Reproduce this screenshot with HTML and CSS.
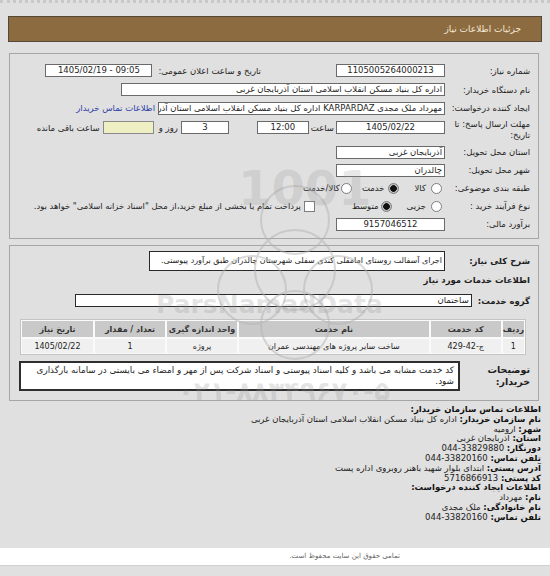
FILE: index.html
```html
<!DOCTYPE html>
<html lang="fa" dir="rtl">
<head>
<meta charset="utf-8">
<title>جزئیات اطلاعات نیاز</title>
<link rel="stylesheet" href="styles.css">
</head>
<body>
<div class="topdots"></div>
<div class="page">
  <div class="titlebar">جزئیات اطلاعات نیاز</div>

  <div class="box box1">
    <div class="row r1">
      <div class="lbl">شماره نیاز:</div>
      <div class="val">
        <span class="inp w107 c">1105005264000213</span>
        <span class="txt t-pub">تاریخ و ساعت اعلان عمومی:</span>
        <span class="inp w105 c m6 ltr">1405/02/19 - 09:05</span>
      </div>
    </div>
    <div class="row r2">
      <div class="lbl">نام دستگاه خریدار:</div>
      <div class="val"><span class="inp w322">اداره کل بنیاد مسکن انقلاب اسلامی استان آذربایجان غربی</span></div>
    </div>
    <div class="row r3">
      <div class="lbl">ایجاد کننده درخواست:</div>
      <div class="val">
        <span class="inp w285 clip">مهرداد ملک مجدی KARPARDAZ اداره کل بنیاد مسکن انقلاب اسلامی استان آذربایجان غربی</span>
        <span class="link">اطلاعات تماس خریدار</span>
      </div>
    </div>
    <div class="row r4">
      <div class="lbl">مهلت ارسال پاسخ: تا<br>تاریخ:</div>
      <div class="val">
        <span class="inp w107 c">1405/02/22</span>
        <span class="txt m2">ساعت</span>
        <span class="inp w50 c m2">12:00</span>
        <span class="inp w46 c m28">3</span>
        <span class="txt m3">روز و</span>
        <span class="inp w49 yellow m5"></span>
        <span class="txt m3">ساعت باقی مانده</span>
      </div>
    </div>
    <div class="row r5">
      <div class="lbl">استان محل تحویل:</div>
      <div class="val"><span class="inp w107">آذربایجان غربی</span></div>
    </div>
    <div class="row r6">
      <div class="lbl">شهر محل تحویل:</div>
      <div class="val"><span class="inp w107">چالدران</span></div>
    </div>
    <div class="row r7">
      <div class="lbl">طبقه بندی موضوعی:</div>
      <div class="val">
        <span class="radio m3"></span><span class="txt m5">کالا</span>
        <span class="radio on m16"></span><span class="txt m3">خدمت</span>
        <span class="radio m10"></span><span class="txt m1">کالا/خدمت</span>
      </div>
    </div>
    <div class="row r8">
      <div class="lbl">نوع فرآیند خرید :</div>
      <div class="val">
        <span class="radio m3"></span><span class="txt m5">جزیی</span>
        <span class="radio on m15"></span><span class="txt m2">متوسط</span>
        <span class="check m37"></span><span class="txt m3 small">پرداخت تمام یا بخشی از مبلغ خرید،از محل "اسناد خزانه اسلامی" خواهد بود.</span>
      </div>
    </div>
    <div class="row r9">
      <div class="lbl">برآورد مالی:</div>
      <div class="val"><span class="inp w107 c">9157046512</span></div>
    </div>
  </div>

  <div class="box box2">
    <div class="row desc">
      <div class="blbl">شرح کلی نیاز:</div>
      <span class="inp dark w294 tall">اجرای آسفالت روستای امامقلی کندی سفلی شهرستان چالدران طبق برآورد پیوستی.</span>
    </div>
    <div class="heading">اطلاعات خدمات مورد نیاز</div>
    <div class="row grp">
      <div class="blbl">گروه خدمت:</div>
      <span class="inp dark w395">ساختمان</span>
    </div>
    <table class="items">
      <thead>
        <tr><th class="c1">ردیف</th><th class="c2">کد خدمت</th><th class="c3">نام خدمت</th><th class="c4">واحد اندازه گیری</th><th class="c5">تعداد / مقدار</th><th class="c6">تاریخ نیاز</th></tr>
      </thead>
      <tbody>
        <tr><td>1</td><td>ج-42-429</td><td>ساخت سایر پروژه های مهندسی عمران</td><td>پروژه</td><td>1</td><td>1405/02/22</td></tr>
      </tbody>
    </table>
    <div class="row notes">
      <div class="blbl nl">توضیحات<br>خریدار:</div>
      <div class="notebox">کد خدمت مشابه می باشد و کلیه اسناد پیوستی و اسناد شرکت پس از مهر و امضاء می بایستی در سامانه بارگذاری شود.</div>
    </div>
  </div>

  <div class="contact">
    <div><b>اطلاعات تماس سازمان خریدار:</b></div>
    <div><b>نام سازمان خریدار:</b> اداره کل بنیاد مسکن انقلاب اسلامی استان آذربایجان غربی</div>
    <div><b>شهر:</b> ارومیه</div>
    <div><b>استان:</b> آذربایجان غربی</div>
    <div><b>دورنگار:</b> 33829880-044</div>
    <div><b>تلفن تماس:</b> 33820160-044</div>
    <div><b>آدرس پستی:</b> ابتدای بلوار شهید باهنر روبروی اداره پست</div>
    <div><b>کد پستی:</b> 5716866913</div>
    <div><b>اطلاعات ایجاد کننده درخواست:</b></div>
    <div><b>نام:</b> مهرداد</div>
    <div><b>نام خانوادگی:</b> ملک مجدی</div>
    <div><b>تلفن تماس:</b> 33820160-044</div>
  </div>
</div>
<div class="footer"><span>تمامی حقوق این سایت محفوظ است.</span></div>

<div class="wm wm-logo">
  <svg width="190" height="220" viewBox="0 0 190 220">
    <g fill="none" stroke="#b4b4b4" stroke-width="2" opacity="0.5">
      <circle cx="95" cy="120" r="40"/>
      <circle cx="95" cy="70" r="34"/>
      <circle cx="52" cy="140" r="34"/>
      <circle cx="138" cy="140" r="34"/>
      <circle cx="95" cy="175" r="34"/>
    </g>
  </svg>
</div>
<div class="wm wm-num">1001</div>
<div class="wm wm-brand">ParsNamadData</div>
<div class="wm wm-phone">۰۲۱-۸۸۳۴۹۶۷۰-۵</div>
</body>
</html>
```

FILE: styles.css
```css
html, body {
  margin: 0;
  padding: 0;
}
body {
  background: #e0e0e0;
  font-family: "DejaVu Sans", sans-serif;
  font-size: 8.5px;
  color: #1e1e1e;
  direction: rtl;
  position: relative;
  height: 576px;
  overflow: hidden;
}
.topdots {
  height: 0;
  border-top: 3px dotted #c9c9c9;
}
.page {
  padding: 0 8px;
}
.titlebar {
  margin-top: 13px;
  height: 24px;
  line-height: 24px;
  background: #8d6b40;
  border: 1px solid #564839;
  color: #f3e9d6;
  font-size: 9px;
  padding-right: 20px;
}
.box {
  border: 1px solid #a6a6a6;
  margin: 0 3px 0 1px;
}
.box1 {
  margin-top: 11px;
  padding: 7px 8px 5px 8px;
}
.row {
  display: flex;
  align-items: center;
}
.box1 .row {
  height: 18px;
}
.box1 .r1, .box1 .r2 { height: 19px; }
.box1 .r4 {
  height: 26px;
  align-items: flex-start;
}
.box1 .r4 .lbl { padding-top: 2px; line-height: 11px; }
.box1 .r4 .val { padding-top: 4px; }
.lbl {
  width: 85px;
  flex: none;
  white-space: nowrap;
}
.val {
  display: flex;
  align-items: center;
  flex: 1;
}
.inp {
  display: block;
  height: 11px;
  line-height: 11px;
  background: #fff;
  border: 1px solid #6a6a6a;
  padding: 0 2px;
  white-space: nowrap;
  overflow: hidden;
  box-sizing: content-box;
  flex: none;
}
.inp.c { text-align: center; }
.ltr { direction: ltr; }
.w107 { width: 103px; }
.w105 { width: 101px; }
.w322 { width: 318px; }
.w285 { width: 281px; }
.w50 { width: 46px; }
.w46 { width: 42px; }
.w49 { width: 45px; }
.yellow { background: #efefc4; border-color: #8a8a8a; }
.txt { white-space: nowrap; flex: none; }
.small { font-size: 8.4px; }
.t-pub { margin-right: 75px; }
.link { color: #2b3fa6; margin-right: 3px; white-space: nowrap; }
.m1 { margin-right: 1px; }
.m2 { margin-right: 2px; }
.m3 { margin-right: 3px; }
.m5 { margin-right: 5px; }
.m6 { margin-right: 6px; }
.m10 { margin-right: 10px; }
.m15 { margin-right: 15px; }
.m16 { margin-right: 16px; }
.m28 { margin-right: 28px; }
.m37 { margin-right: 37px; }
.radio {
  width: 9px;
  height: 9px;
  border-radius: 50%;
  border: 1px solid #7d7d7d;
  background: #fff;
  flex: none;
}
.radio.on {
  background: radial-gradient(circle, #111 0 3px, #bdbdbd 3.6px);
}
.check {
  width: 9px;
  height: 9px;
  border: 1px solid #7d7d7d;
  background: #fff;
  flex: none;
}

.box2 {
  margin-top: 6px;
  padding: 5px 8px 9px 8px;
}
.blbl {
  font-weight: bold;
  white-space: nowrap;
  flex: none;
}
.desc .blbl { width: 85px; }
.inp.dark { border-color: #2a2a2a; }
.w294 { width: 290px; }
.tall { height: 18px; line-height: 18px; font-size: 8px; }
.heading {
  font-weight: bold;
  margin: 3px 0 8px;
  line-height: 12px;
}
.grp .blbl { margin-left: 6px; }
.w395 { width: 391px; }
.items {
  margin: 12px 4px 0 4px;
  width: 506px;
  border-collapse: separate;
  border-spacing: 0;
  border: 1px solid #c4c4c4;
  background: #f1f1f1;
  font-size: 8px;
}
.items th, .items td {
  border: 1px solid #fafafa;
  text-align: center;
  padding: 0;
  white-space: nowrap;
}
.items th {
  background: #c9c9c9;
  height: 16px;
  font-weight: bold;
  color: #333;
}
.items td {
  height: 14px;
  background: #f0f0f0;
}
.c1 { width: 18px; }
.c2 { width: 70px; }
.c4 { width: 70px; }
.c5 { width: 70px; }
.c6 { width: 71px; }
.notes {
  margin-top: 6px;
  align-items: flex-start;
}
.nl { width: 62px; line-height: 12px; padding-top: 3px; font-size: 9.5px; }
.notebox {
  margin-right: 8px;
  width: 441px;
  background: #fff;
  border: 2px solid #2e2e2e;
  padding: 2px 4px 0;
  line-height: 11px;
  font-size: 8.8px;
  box-sizing: border-box;
  height: 30px;
}

.contact {
  margin-top: 4px;
  padding-right: 1px;
  line-height: 9.8px;
  font-size: 8.5px;
  color: #222;
}
.contact b { color: #111; }
.footer {
  position: absolute;
  left: 0;
  right: 0;
  top: 548px;
  height: 17px;
  background: #fff;
  border-bottom: 1px solid #d0d0d0;
  font-size: 7px;
  color: #666;
  line-height: 17px;
}
.footer span {
  position: absolute;
  right: 150px;
}

.wm {
  position: absolute;
  pointer-events: none;
  color: rgba(150, 150, 150, 0.26);
  font-weight: bold;
  direction: ltr;
  white-space: nowrap;
  font-family: "DejaVu Sans", sans-serif;
}
.wm-logo { left: 200px; top: 150px; }
.wm-num { left: 238px; top: 160px; font-size: 48px; color: rgba(150,150,150,0.22); }
.wm-brand { left: 156px; top: 290px; font-size: 25px; }
.wm-phone { left: 178px; top: 376px; font-size: 26px; }
```
